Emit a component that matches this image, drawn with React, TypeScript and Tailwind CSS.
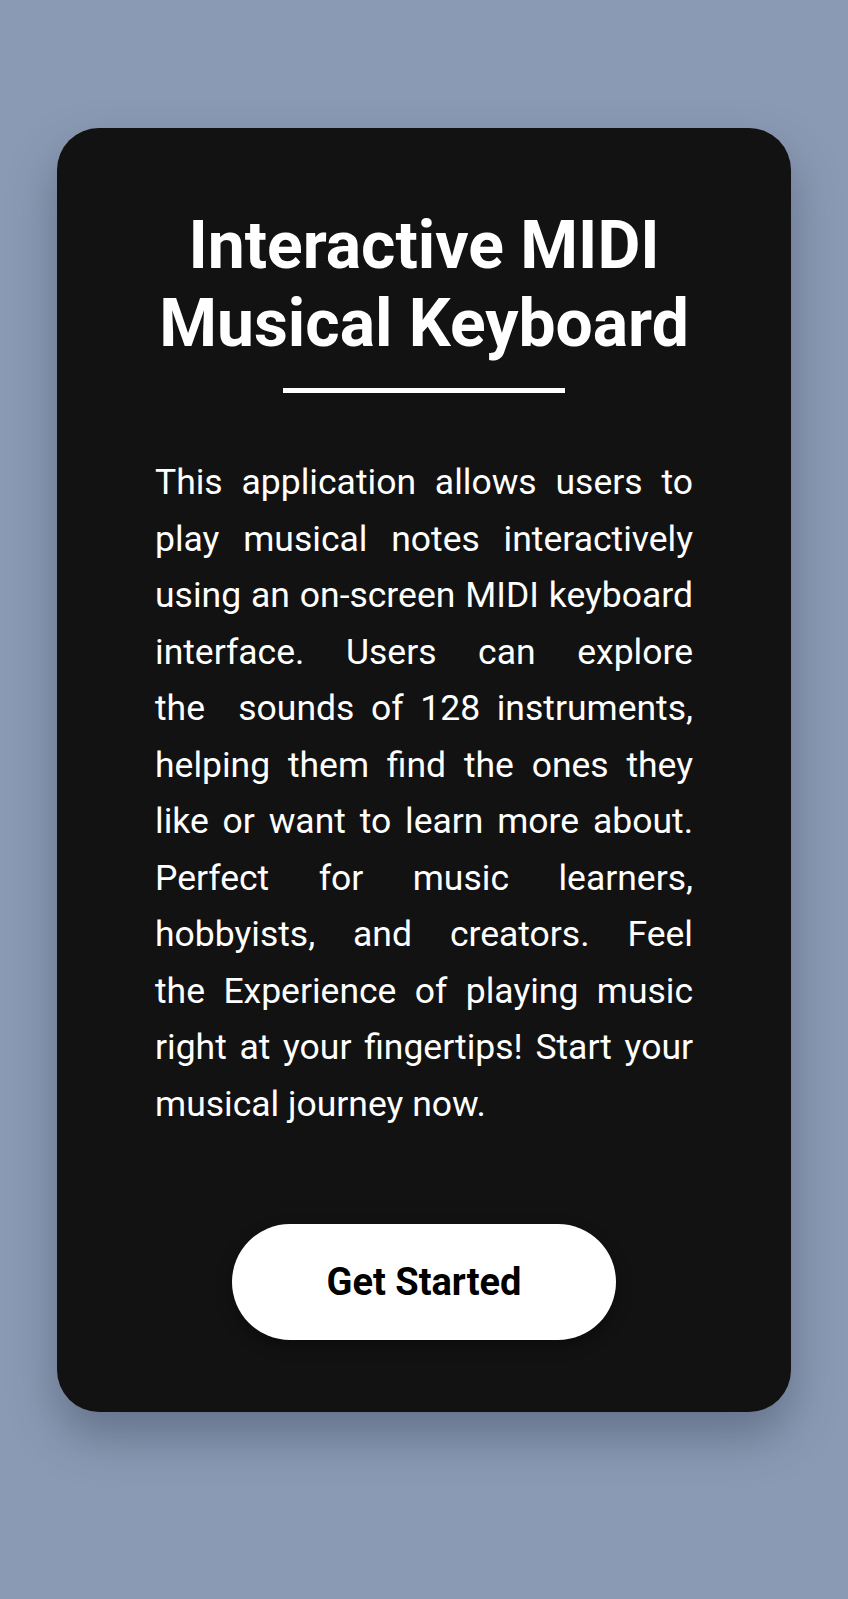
const LINES = [
  'This application allows users to',
  'play musical notes interactively',
  'using an on-screen MIDI keyboard',
  'interface. Users can explore',
  'the\u00a0 sounds of 128 instruments,',
  'helping them find the ones they',
  'like or want to learn more about.',
  'Perfect for music learners,',
  'hobbyists, and creators. Feel',
  'the Experience of playing music',
  'right at your fingertips! Start your',
]

export default function App() {
  return (
    <div
      className="min-h-screen bg-[#8b9ab4] px-[57px] pt-[128px] pb-[188px]"
      style={{ fontFamily: 'Roboto, "Noto Sans", sans-serif' }}
    >
      <div className="flex flex-col items-center rounded-[42px] bg-[#121212] px-[98px] pt-[79px] pb-[72px] shadow-[0_24px_48px_rgba(30,40,60,0.35)]">
        <h1 className="text-center text-[66px] font-bold leading-[78px] text-white">
          Interactive MIDI
          <br />
          Musical Keyboard
        </h1>
        <div className="mt-[25px] h-[5px] w-[282px] bg-white" />
        <p className="mt-[61px] w-full text-[35.5px] leading-[56.5px] text-white">
          {LINES.map(line => (
            <span
              key={line}
              className="block whitespace-pre-wrap text-justify [text-align-last:justify]"
            >
              {line}
            </span>
          ))}
          <span className="block">musical journey now.</span>
        </p>
        <button className="mt-[92px] h-[116px] w-[384px] rounded-full bg-white text-[38px] font-bold text-black shadow-[0_6px_16px_rgba(0,0,0,0.35)]">
          Get Started
        </button>
      </div>
    </div>
  )
}
